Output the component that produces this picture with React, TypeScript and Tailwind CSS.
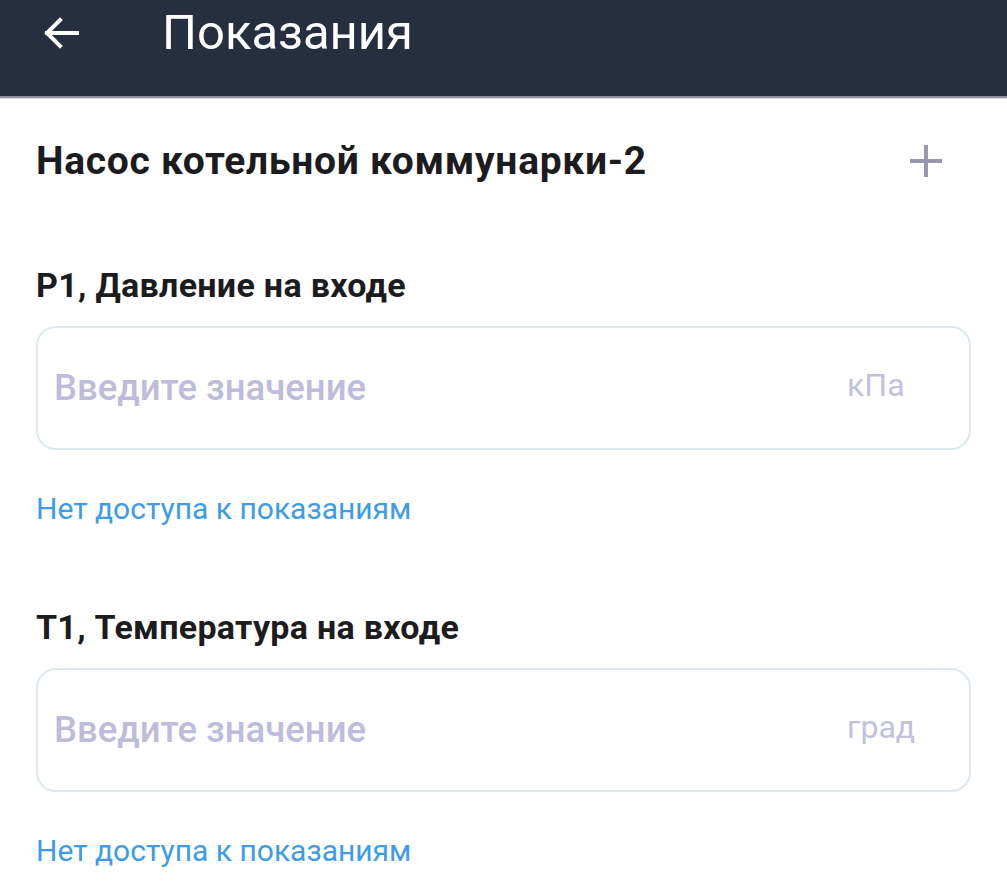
export default function App() {
  const sections = [
    { label: "P1, Давление на входе", unit: "кПа" },
    { label: "T1, Температура на входе", unit: "град" },
  ];

  return (
    <div className="min-h-screen bg-white" style={{ fontFamily: "Roboto, 'Noto Sans', sans-serif" }}>
      <header className="h-[98px] bg-[#262f3f] border-b-2 border-[#8e8c99] shadow-[0_1px_0_#dcdbe2]">
        <div className="flex items-center h-[66px]">
          <button className="ml-[40px] w-[42px] h-[42px] flex items-center justify-center text-white">
            <svg width="40" height="40" viewBox="0 0 40 40" fill="none" stroke="currentColor" strokeWidth="4" strokeLinecap="square">
              <path d="M36 20H6" />
              <path d="M19 7L6 20l13 13" />
            </svg>
          </button>
          <h1 className="ml-[80px] text-[49px] leading-[66px] text-white font-normal">Показания</h1>
        </div>
      </header>

      <main className="px-9">
        <div className="flex items-center justify-between pt-[42px] h-[84px]">
          <h2 className="text-[39px] leading-[40px] font-bold text-[#1c1c1f] tracking-[0.7px]">
            Насос котельной коммунарки-2
          </h2>
          <button className="mr-[27px] w-[36px] h-[36px] flex items-center justify-center text-[#9797b0]">
            <svg width="36" height="36" viewBox="0 0 36 36" fill="none" stroke="currentColor" strokeWidth="4">
              <path d="M18 2v32" />
              <path d="M2 18h32" />
            </svg>
          </button>
        </div>

        {sections.map((s, i) => (
          <div key={i} className={i === 0 ? "mt-[83px]" : "mt-[80px]"}>
            <div className="text-[34px] leading-[40px] font-bold text-[#1c1c1f] tracking-[0.3px]">{s.label}</div>
            <div className="mt-[21px] h-[124px] rounded-[20px] border-2 border-[#dde9ef] flex items-center">
              <input
                className="flex-1 min-w-0 pl-4 text-[36.5px] font-medium text-[#1c1c1f] placeholder-[#bdbddb] bg-transparent outline-none"
                placeholder="Введите значение"
              />
              <span className="w-[122px] pb-[6px] text-[32px] text-[#c2c2de]">{s.unit}</span>
            </div>
            <a href="#" className="block mt-[41px] text-[30px] leading-[36px] text-[#3d9be9]">
              Нет доступа к показаниям
            </a>
          </div>
        ))}
      </main>
    </div>
  );
}
